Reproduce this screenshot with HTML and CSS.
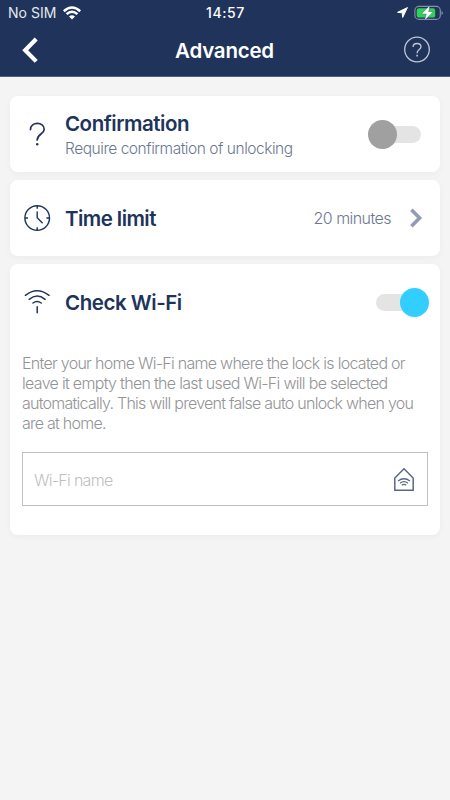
FILE: index.html
```html
<!DOCTYPE html>
<html lang="en">
<head>
<meta charset="utf-8">
<title>Advanced</title>
<link rel="stylesheet" href="styles.css">
</head>
<body>
<header class="header">
  <div class="status">
    <div class="carrier"><span class="sim">No SIM</span>
      <svg width="18" height="14" viewBox="0 0 18 14" fill="none" stroke="#fff" stroke-width="2.5"><path d="M.8 5.2Q9-2.1 17.2 5.2M3.6 8.2Q9 3.2 14.4 8.2"/><path d="M6 10.5Q9 7.9 12 10.5L9 13.5Z" fill="#fff" stroke="none"/></svg>
    </div>
    <span class="time">14:57</span>
    <div class="power">
      <svg width="11" height="11" viewBox="0 0 11 11"><path d="M10.4.6.6 5.3 5.2 5.8 5.7 10.4Z" fill="#fff" stroke="#fff" stroke-width="1" stroke-linejoin="round"/></svg>
      <svg width="29" height="16" viewBox="0 0 29 16"><rect x=".9" y="1.4" width="25.4" height="13" rx="4" fill="none" stroke="#8490a9" stroke-width="1.1"/><rect x="2.7" y="3.2" width="18.5" height="9.4" rx="2.2" fill="#30d158"/><path d="M27.5 6v4Q29 9.2 29 8T27.5 6" fill="#8490a9"/><path d="M15.8.6 7.5 8.9H12.3L10.6 15.4 19.3 6.7H14.7Z" fill="#fff" stroke="#20345b" stroke-width=".3"/></svg>
    </div>
  </div>
  <nav class="nav">
    <svg class="back" width="18" height="27" viewBox="0 0 18 27" fill="none" stroke="#fff" stroke-width="4.2"><path d="M16.2 2 5.2 13.2 16.2 24.4"/></svg>
    <h1 class="heading">Advanced</h1>
    <svg class="help" width="28" height="28" viewBox="0 0 28 28" fill="none" stroke="#c1c7d2" stroke-width="1.3"><circle cx="14" cy="13.5" r="12.3"/><path d="M10.1 10.9C10.1 6.3 18 6.4 18 10.8 18 13.7 14.1 13.4 14.1 17.2"/><path d="M14.1 18.8v1.7" stroke-width="1.6"/></svg>
  </nav>
</header>
<main class="content">
  <section class="card row">
    <svg class="icon" width="28" height="28" viewBox="0 0 28 28" fill="none" stroke="#20345b" stroke-width="1.7" stroke-linecap="round"><path d="M7.5 9.6C7.6 1.3 21.2 1.4 21.2 9.2 21.2 14.1 14.2 14 14.2 20"/><circle cx="14.2" cy="24.2" r="1.2" fill="#20345b" stroke="none"/></svg>
    <div class="labels">
      <h2 class="title confirmation">Confirmation</h2>
      <p class="subtitle">Require confirmation of unlocking</p>
    </div>
    <span class="toggle off"></span>
  </section>
  <section class="card row">
    <svg class="icon" width="28" height="28" viewBox="0 0 28 28" fill="none" stroke="#20345b" stroke-width="1.4"><circle cx="14.2" cy="14" r="12.3"/><path d="M14.2 1.7v3.1M14.2 23.2v3.1M1.9 14H5M23.4 14h3.1M14.2 7.5V13.8L19.6 19.2"/></svg>
    <h2 class="title limit">Time limit</h2>
    <span class="value">20 minutes</span>
    <svg class="chevron" width="14" height="20" viewBox="0 0 14 20" fill="none" stroke="#939cb2" stroke-width="3.6"><path d="M1.4 1.7 9.6 10 1.4 18.3"/></svg>
  </section>
  <section class="card wifi">
    <div class="row">
      <svg class="icon" width="28" height="28" viewBox="0 0 28 28" fill="none" stroke="#20345b" stroke-width="1.5" stroke-linecap="round"><path d="M2.4 7.3Q14.1-1.9 26 7.3M6.2 11.3Q14.1 4.7 22.1 11.3M10 15Q14.1 11.9 18.3 15M14.2 18.8v6"/></svg>
      <h2 class="title check">Check Wi-Fi</h2>
      <span class="toggle on"></span>
    </div>
    <p class="description"><span class="l1">Enter your home Wi-Fi name where the lock is located or</span><br><span class="l2">leave it empty then the last used Wi-Fi will be selected</span><br><span class="l3">automatically. This will prevent false auto unlock when you</span><br><span class="l4">are at home.</span></p>
    <div class="field"><span class="placeholder">Wi-Fi name</span>
      <svg width="22" height="25" viewBox="0 0 22 25" fill="none" stroke="#586889" stroke-width="1.5"><path d="M1.8 11 11 1.7 20.2 11V23.2H1.8Z"/><path d="M5 14Q11 9.5 17 14M7 16.3Q11 13.1 15 16.3M8.8 18.2Q11 16.6 13.2 18.2" stroke-width="1.3"/></svg>
    </div>
  </section>
</main>
</body>
</html>
```
FILE: styles.css
```css
* { box-sizing: border-box; }
body {
  margin: 0;
  min-height: 800px;
  background: #f4f4f4;
  color: #20345b;
  font-family: Inter, "Liberation Sans", sans-serif;
}
h1, h2, p { margin: 0; }
svg { display: block; flex: none; }
.header {
  height: 77px;
  background: #20345b;
  border-bottom: 1px solid #53627f;
  color: #fff;
}
.status {
  height: 24px;
  display: grid;
  grid-template-columns: 1fr auto 1fr;
  align-items: center;
  padding: 0 7px 0 8px;
}
.carrier { display: flex; align-items: center; gap: 6px; }
.sim { font-size: 14px; line-height: 24px; color: #e4e7ed; letter-spacing: .05px; }
.time { font-size: 14px; font-weight: 500; line-height: 24px; letter-spacing: .6px; padding-top: 1px; }
.power { display: flex; justify-content: flex-end; align-items: center; gap: 6px; }
.nav {
  height: 52px;
  display: grid;
  grid-template-columns: 1fr auto 1fr;
  align-items: center;
  padding: 0 19px 0 18px;
}
.back { margin-left: 2px; }
.heading { font-size: 20.5px; font-weight: 600; line-height: 24px; padding-top: 2px; letter-spacing: -.22px; }
.help { justify-self: end; }
.content { padding: 19px 10px 0; display: flex; flex-direction: column; gap: 8px; }
.card {
  min-height: 76px;
  background: #fff;
  border-radius: 8px;
  box-shadow: 0 2px 7px rgba(0, 0, 0, .035);
}
.row { height: 76px; display: flex; align-items: center; padding: 0 12px 0 13px; }
.icon { margin-right: 14px; }
.labels { padding-top: 2px; }
.title { font-size: 20.5px; font-weight: 600; line-height: 26px; white-space: nowrap; }
.confirmation { letter-spacing: -.48px; }
.limit { letter-spacing: -.56px; padding-top: 1px; }
.check { letter-spacing: -.46px; padding-top: 1px; }
.subtitle {
  font-size: 15.5px;
  font-weight: 300;
  line-height: 23px;
  letter-spacing: -.46px;
  color: #6c7891;
  white-space: nowrap;
}
.value { margin-left: auto; font-size: 16px; font-weight: 300; color: #6c7891; letter-spacing: -.55px; }
.chevron { margin: 0 4px 0 19px; }
.toggle {
  position: relative;
  width: 46px;
  height: 17px;
  border-radius: 9px;
  background: #e4e4e4;
  margin-left: auto;
}
.toggle::after {
  content: "";
  position: absolute;
  top: -6px;
  width: 29px;
  height: 29px;
  border-radius: 50%;
}
.off { margin-right: 7px; }
.off::after { left: -7px; background: #a0a0a0; }
.on { margin-right: 6.5px; }
.on::after { right: -7px; background: #32ceff; }
.wifi { height: 271px; }
.description {
  margin: 13px 12px 0;
  font-size: 16px;
  font-weight: 300;
  line-height: 20px;
  color: #939497;
  white-space: nowrap;
}
.l1 { letter-spacing: -.72px; }
.l2 { letter-spacing: -.69px; }
.l3 { letter-spacing: -.75px; }
.l4 { letter-spacing: -.76px; }
.field {
  height: 54px;
  margin: 19px 12px 0;
  padding: 0 12px 0 11px;
  border: 1px solid #bfc0c1;
  display: flex;
  align-items: center;
  justify-content: space-between;
}
.placeholder { padding-top: 2px; font-size: 16px; font-weight: 300; letter-spacing: -.7px; color: #bfbfc1; }
```
